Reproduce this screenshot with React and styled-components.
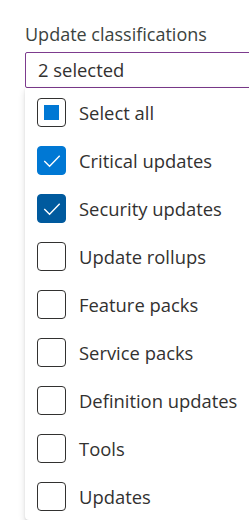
import React from 'react'
import styled, { createGlobalStyle } from 'styled-components'

const options = [
	{ label: 'Select all', state: 'mixed' },
	{ label: 'Critical updates', state: 'checked' },
	{ label: 'Security updates', state: 'hover' },
	{ label: 'Update rollups' },
	{ label: 'Feature packs' },
	{ label: 'Service packs' },
	{ label: 'Definition updates' },
	{ label: 'Tools' },
	{ label: 'Updates' },
]

const Check = () => (
	<svg width='28' height='28' viewBox='0 0 28 28'>
		<path d='M6.5 15 L12 20.5 L22.5 9.5' fill='none' stroke='#fff' strokeWidth='1.4' />
	</svg>
)

const App = () => {
	return (
		<>
			<GlobalStyle />
			<Wrapper>
				<Label>Update classifications</Label>
				<Field>2 selected</Field>
				<Panel>
					{options.map((o) => (
						<Row key={o.label}>
							<Box $state={o.state}>
								{o.state === 'mixed' && <Square />}
								{(o.state === 'checked' || o.state === 'hover') && <Check />}
							</Box>
							<Text>{o.label}</Text>
						</Row>
					))}
				</Panel>
			</Wrapper>
		</>
	)
}

export default App

const GlobalStyle = createGlobalStyle`
	body {
		margin: 0;
		background: #fff;
		overflow: hidden;
		font-family: 'Open Sans', 'Noto Sans', sans-serif;
	}
`
const Wrapper = styled.div`
	padding: 22px 0 0 25px;
	width: 224px;
	overflow: visible;
`
const Label = styled.div`
	font-size: 18px;
	line-height: 24px;
	color: #3b4340;
	margin-bottom: 6px;
	white-space: nowrap;
`
const Field = styled.div`
	box-sizing: border-box;
	height: 36px;
	width: 240px;
	border: 1px solid #7d3b8e;
	border-radius: 2px;
	padding-left: 12px;
	font-size: 18.4px;
	line-height: 33px;
	color: #323130;
`
const Panel = styled.div`
	width: 240px;
	background: #fff;
	border-radius: 0 0 4px 4px;
	box-shadow: 0 3.2px 7.2px rgba(0, 0, 0, 0.13), 0 0.6px 1.8px rgba(0, 0, 0, 0.11);
`
const Row = styled.div`
	display: flex;
	align-items: center;
	height: 48px;
	padding-left: 12px;
	gap: 13px;
`
const Box = styled.div`
	box-sizing: border-box;
	flex: none;
	width: 29px;
	height: 29px;
	border-radius: 4px;
	display: flex;
	align-items: center;
	justify-content: center;
	border: 1px solid
		${(p) => (p.$state === 'checked' ? '#0078d4' : p.$state === 'hover' ? '#005a9e' : '#323130')};
	background: ${(p) =>
		p.$state === 'checked' ? '#0078d4' : p.$state === 'hover' ? '#005a9e' : '#fff'};
`
const Square = styled.div`
	width: 15px;
	height: 15px;
	background: #0078d4;
`
const Text = styled.span`
	font-size: 18.4px;
	color: #323130;
	white-space: nowrap;
`
